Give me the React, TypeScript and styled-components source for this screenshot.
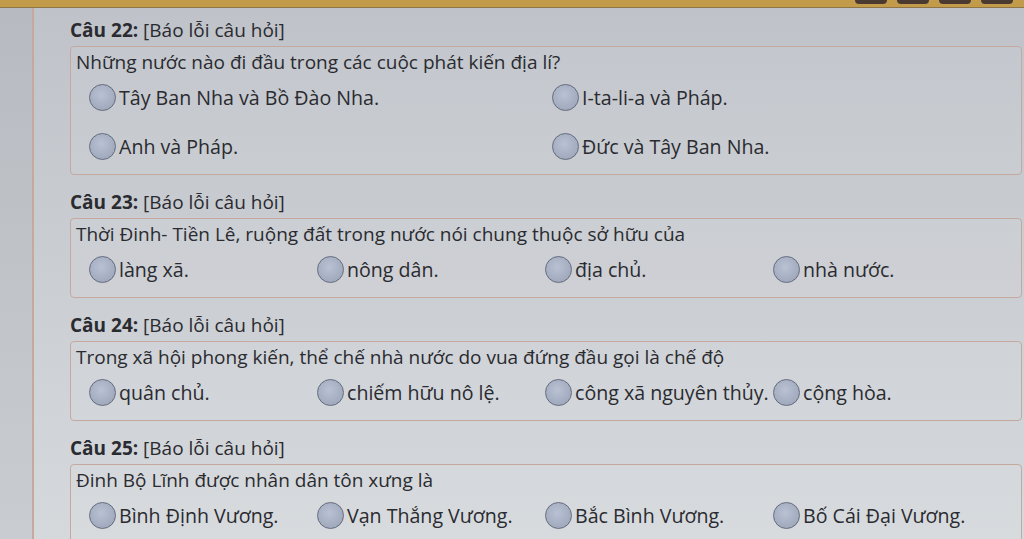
import React from "react";
import styled, { createGlobalStyle } from "styled-components";

const GlobalStyle = createGlobalStyle`
  html, body { margin: 0; padding: 0; }
  body {
    font-family: "Open Sans", "Noto Sans", sans-serif;
    color: #2a2b30;
    background: #c4c7cc;
  }
  * { box-sizing: border-box; }
`;

const Page = styled.div`
  width: 1024px;
  height: 539px;
  overflow: hidden;
  display: flex;
  flex-direction: column;
  background: linear-gradient(180deg, #bfc2c8 0%, #c9ccd1 45%, #d6d9dc 100%);
`;

const TopBar = styled.div`
  height: 8px;
  flex: none;
  background: #c29b4b;
  border-bottom: 1px solid #8f7644;
  display: flex;
  justify-content: flex-end;
  align-items: flex-start;
  gap: 10px;
  padding-right: 11px;
`;

const BarButton = styled.div`
  width: 32px;
  height: 4px;
  background: #4b3a31;
  border-radius: 0 0 6px 6px;
`;

const Body = styled.div`
  flex: 1;
  display: flex;
  min-height: 0;
`;

const LeftStrip = styled.div`
  width: 34px;
  flex: none;
  background: linear-gradient(180deg, #b7bac0 0%, #c9ccd0 100%);
  border-right: 2px solid #c6a99c;
`;

const Content = styled.div`
  flex: 1;
  padding: 11px 4px 0 36px;
  display: flex;
  flex-direction: column;
  gap: 16px;
`;

const Block = styled.section`
  display: flex;
  flex-direction: column;
`;

const Heading = styled.div`
  font-size: 19px;
  line-height: 22px;
  margin-bottom: 5px;
  color: #2a2b30;
  b { font-weight: 700; }
`;

const Box = styled.div`
  border: 1px solid #c6a99e;
  border-radius: 4px;
  background: rgba(255, 255, 255, 0.06);
  padding: 4px 6px 14px 5px;
`;

const QuestionText = styled.div`
  font-size: 19px;
  line-height: 22px;
`;

const Options = styled.div<{ $cols: number; $rowGap: number }>`
  display: grid;
  grid-template-columns: repeat(${(p) => p.$cols}, ${(p) => (p.$cols === 2 ? 463 : 228)}px);
  row-gap: ${(p) => p.$rowGap}px;
  margin-top: 11px;
  padding-left: 13px;
`;

const Option = styled.label`
  display: flex;
  align-items: center;
  gap: 3px;
  font-size: 19.6px;
  line-height: 22px;
  white-space: nowrap;
`;

const Radio = styled.span`
  width: 27px;
  height: 27px;
  flex: none;
  border-radius: 50%;
  background: radial-gradient(circle at 45% 40%, #b9c1d3 0%, #a2aabe 70%, #959db2 100%);
  border: 1.5px solid #646b7d;
`;

type Q = {
  n: number;
  text: string;
  options: string[];
  cols: number;
  rowGap?: number;
};

const questions: Q[] = [
  {
    n: 22,
    text: "Những nước nào đi đầu trong các cuộc phát kiến địa lí?",
    options: [
      "Tây Ban Nha và Bồ Đào Nha.",
      "I-ta-li-a và Pháp.",
      "Anh và Pháp.",
      "Đức và Tây Ban Nha.",
    ],
    cols: 2,
    rowGap: 22,
  },
  {
    n: 23,
    text: "Thời Đinh- Tiền Lê, ruộng đất trong nước nói chung thuộc sở hữu của",
    options: ["làng xã.", "nông dân.", "địa chủ.", "nhà nước."],
    cols: 4,
  },
  {
    n: 24,
    text: "Trong xã hội phong kiến, thể chế nhà nước do vua đứng đầu gọi là chế độ",
    options: ["quân chủ.", "chiếm hữu nô lệ.", "công xã nguyên thủy.", "cộng hòa."],
    cols: 4,
  },
  {
    n: 25,
    text: "Đinh Bộ Lĩnh được nhân dân tôn xưng là",
    options: ["Bình Định Vương.", "Vạn Thắng Vương.", "Bắc Bình Vương.", "Bố Cái Đại Vương."],
    cols: 4,
  },
];

export default function App() {
  return (
    <>
      <GlobalStyle />
      <Page>
        <TopBar>
          <BarButton />
          <BarButton />
          <BarButton />
          <BarButton />
        </TopBar>
        <Body>
          <LeftStrip />
          <Content>
            {questions.map((q) => (
              <Block key={q.n}>
                <Heading>
                  <b>Câu {q.n}:</b> [Báo lỗi câu hỏi]
                </Heading>
                <Box>
                  <QuestionText>{q.text}</QuestionText>
                  <Options $cols={q.cols} $rowGap={q.rowGap ?? 0}>
                    {q.options.map((o) => (
                      <Option key={o}>
                        <Radio />
                        {o}
                      </Option>
                    ))}
                  </Options>
                </Box>
              </Block>
            ))}
          </Content>
        </Body>
      </Page>
    </>
  );
}
